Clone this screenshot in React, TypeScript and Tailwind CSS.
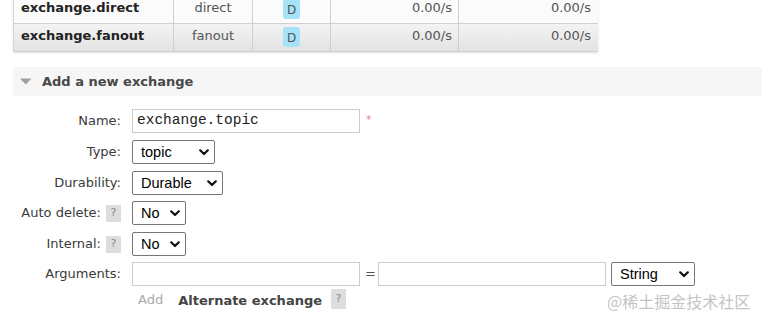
import React from "react";

const font = { fontFamily: '"DejaVu Sans", Verdana, sans-serif' };

function Chevron() {
  return (
    <svg width="10" height="7" viewBox="0 0 10 7" className="shrink-0">
      <path d="M1.2 1.3 L5 5 L8.8 1.3" fill="none" stroke="#111" strokeWidth="2.2" strokeLinecap="round" strokeLinejoin="round" />
    </svg>
  );
}

function Select({ value, w, className = "" }: { value: string; w: string; className?: string }) {
  return (
    <div
      className={`flex h-[24px] shrink-0 items-center justify-between rounded-[2px] border border-[#767676] bg-white pl-[8px] pr-[5px] text-[14.5px] text-black ${w} ${className}`}
      style={{ fontFamily: '"Liberation Sans", Arial, sans-serif' }}
    >
      <span className="leading-none">{value}</span>
      <Chevron />
    </div>
  );
}

function Help() {
  return (
    <span className="ml-[5px] inline-flex h-[17px] w-[15px] shrink-0 items-center justify-center bg-[#dddddd] text-[11px] text-[#888]">?</span>
  );
}

function Row({ name, type, bg }: { name: string; type: string; bg: string }) {
  return (
    <div className={`flex h-[28px] border-b border-[#d0d0d0] text-[13px] ${bg}`}>
      <div className="w-[160px] border-r border-[#cfcfcf] pl-[7px] pt-[2px] font-bold text-[#222]">{name}</div>
      <div className="w-[79px] border-r border-[#cfcfcf] pt-[2px] text-center text-[#555]">{type}</div>
      <div className="flex w-[78px] justify-center border-r border-[#cfcfcf] pt-[3px]">
        <span className="flex h-[20px] w-[17px] items-center justify-center rounded-[3px] bg-[#a6e3f8] pt-[2px] text-[12px] text-[#555]">D</span>
      </div>
      <div className="w-[128px] border-r border-[#cfcfcf] pr-[6px] pt-[2px] text-right text-[#555]">0.00/s</div>
      <div className="flex-1 pr-[7px] pt-[2px] text-right text-[#555]">0.00/s</div>
    </div>
  );
}

export default function App() {
  return (
    <div className="relative h-[320px] w-[762px] overflow-hidden bg-white" style={font}>
      <div className="ml-[13px] mt-[-4px] w-[585px] border-l border-[#d4d4d4] shadow-[0_1px_2px_rgba(0,0,0,0.12)]">
        <Row name="exchange.direct" type="direct" bg="bg-[#fbfbfb]" />
        <Row name="exchange.fanout" type="fanout" bg="bg-gradient-to-b from-[#f3f3f3] to-[#e3e3e3]" />
      </div>

      <div className="ml-[13px] mt-[15px] flex h-[29px] items-center bg-[#f6f6f6]">
        <svg width="12" height="7" viewBox="0 0 12 7" className="ml-[7px]">
          <path d="M0 0.5 H11.5 L5.75 6.5 Z" fill="#a0a0a0" />
        </svg>
        <span className="ml-[10px] text-[13px] font-bold text-[#484848]">Add a new exchange</span>
      </div>

      <div className="mt-[13px] flex flex-col whitespace-nowrap text-[13px] text-[#3a3a3a]">
        <div className="flex items-center">
          <div className="w-[121px] shrink-0 text-right">Name:</div>
          <div
            className="ml-[11px] flex h-[24px] w-[228px] shrink-0 items-center border border-[#cccccc] pl-[4px] text-[14.5px] text-[#222]"
            style={{ fontFamily: '"Liberation Mono", "Courier New", monospace' }}
          >
            exchange.topic
          </div>
          <span className="ml-[6px] self-start pt-[3px] text-[11px] text-[#f08080]">*</span>
        </div>

        <div className="mt-[7px] flex items-center">
          <div className="w-[121px] shrink-0 text-right">Type:</div>
          <Select value="topic" w="w-[83px]" className="ml-[11px]" />
        </div>

        <div className="mt-[7px] flex items-center">
          <div className="w-[121px] shrink-0 text-right">Durability:</div>
          <Select value="Durable" w="w-[91px]" className="ml-[11px]" />
        </div>

        <div className="mt-[6px] flex items-center">
          <div className="flex w-[121px] shrink-0 items-center justify-end">
            <span>Auto delete:</span>
            <Help />
          </div>
          <Select value="No" w="w-[54px]" className="ml-[11px]" />
        </div>

        <div className="mt-[7px] flex items-center">
          <div className="flex w-[121px] shrink-0 items-center justify-end">
            <span>Internal:</span>
            <Help />
          </div>
          <Select value="No" w="w-[54px]" className="ml-[11px]" />
        </div>

        <div className="mt-[6px] flex items-center">
          <div className="w-[121px] shrink-0 text-right">Arguments:</div>
          <div className="ml-[11px] h-[24px] w-[228px] shrink-0 border border-[#cccccc]" />
          <span className="ml-[5px] w-[13px] shrink-0 text-[13px] text-[#555]">=</span>
          <div className="h-[24px] w-[228px] shrink-0 border border-[#cccccc]" />
          <Select value="String" w="w-[84px]" className="ml-[5px]" />
        </div>

        <div className="mt-[2px] flex items-center">
          <span className="ml-[138px] shrink-0 text-[#aaa]">Add</span>
          <span className="ml-[15px] mt-[3px] shrink-0 font-bold text-[#444]">Alternate exchange</span>
          <span className="ml-[9px] flex h-[20px] w-[15px] shrink-0 items-center justify-center bg-[#dddddd] text-[11px] text-[#888]">?</span>
        </div>
      </div>

      <span
        className="absolute left-[607px] top-[289px] whitespace-nowrap text-[16px] text-[#c4c4c4]"
        style={{ fontFamily: '"Noto Sans CJK SC", "Noto Sans", sans-serif' }}
      >
        @稀土掘金技术社区
      </span>
    </div>
  );
}
